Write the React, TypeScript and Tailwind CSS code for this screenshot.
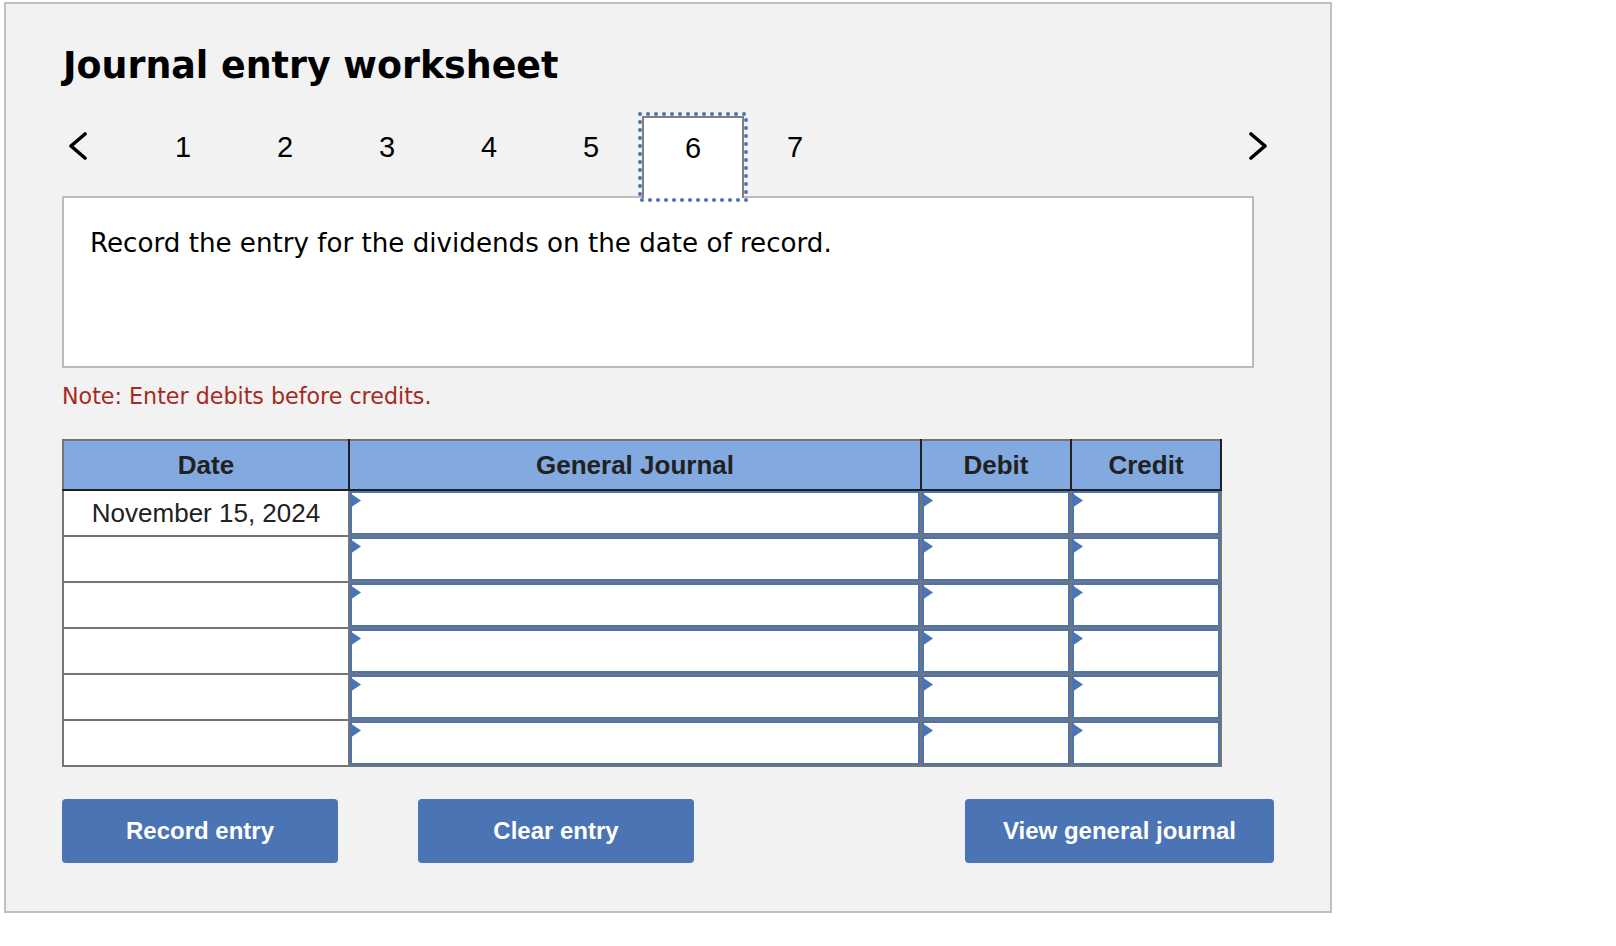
const tabs = [1, 2, 3, 4, 5, 6, 7];
const rows = ["November 15, 2024", "", "", "", "", ""];

function Chevron({ right }: { right?: boolean }) {
  return (
    <svg width="18" height="28" viewBox="0 0 18 28" fill="none" stroke="#000" strokeWidth="3.6" strokeLinecap="round" strokeLinejoin="round">
      <path d={right ? "M2 2l14 12L2 26" : "M16 2L2 14l14 12"} />
    </svg>
  );
}

function EntryCell() {
  return (
    <td className="border-2 border-[#757575] p-0 h-[46px]">
      <div className="relative h-[44px] border-2 border-[#4a74b4] bg-white">
        <svg className="absolute -left-[2px] top-0" width="12" height="15" viewBox="0 0 12 15">
          <path d="M0 0l11 7.5L0 15z" fill="#4a74b4" />
        </svg>
      </div>
    </td>
  );
}

function Btn({ label, w }: { label: string; w: string }) {
  return (
    <button className={`${w} h-[64px] rounded-[4px] bg-[#4a74b4] text-white text-[24px] font-bold`}>{label}</button>
  );
}

export default function App() {
  return (
    <div className="bg-white h-[946px] pl-1 pt-0.5 font-['Liberation_Sans',sans-serif]">
      <div className="w-[1328px] h-[911px] border-2 border-[#c0c0c0] bg-[#f2f2f2] pl-[56px] pt-[37px]">
        <h1 className="ml-px font-['DejaVu_Sans',sans-serif] font-bold text-[36.4px] leading-[50px] text-black mb-[25px]">Journal entry worksheet</h1>

        <div className="flex items-center w-[1212px] h-[82px] relative z-10">
          <div className="w-[70px] pl-[7px] mb-[22px] flex"><Chevron /></div>
          {tabs.map((t) => (
            <div
              key={t}
              className={
                t === 6
                  ? "relative w-[102px] h-[82px] pb-[19px] flex items-center justify-center text-[29px] text-black bg-white border-2 border-b-0 border-[#7f7f7f]"
                  : "w-[102px] h-[82px] pb-[19px] flex items-center justify-center text-[29px] text-black"
              }
            >
              {t}
              {t === 6 && (
                <svg className="absolute -left-[6px] -top-[6px]" width="110" height="90" viewBox="0 0 110 90" fill="none">
                  <rect x="2" y="2" width="106" height="86" stroke="#4a74b4" strokeWidth="4" strokeLinecap="round" strokeDasharray="0 8" />
                </svg>
              )}
            </div>
          ))}
          <div className="ml-auto pr-[7px] mb-[22px] flex"><Chevron right /></div>
        </div>

        <div className="-mt-0.5 w-[1192px] h-[172px] border-2 border-[#bbbbbb] bg-white pl-[26px] pt-[25px] font-['DejaVu_Sans',sans-serif] text-[26.15px] leading-[40px] text-black">
          Record the entry for the dividends on the date of record.
        </div>

        <p className="mt-[14px] font-['DejaVu_Sans',sans-serif] text-[22.2px] leading-[29px] mb-[28px] text-[#a52a1f]">Note: Enter debits before credits.</p>

        <table className="w-[1158px] table-fixed border-collapse bg-white text-[26px] text-[#212121]">
          <colgroup>
            <col className="w-[286px]" />
            <col className="w-[572px]" />
            <col className="w-[150px]" />
            <col className="w-[150px]" />
          </colgroup>
          <thead>
            <tr className="h-[50px] bg-[#82aae0] font-bold">
              <th className="border-2 border-t-[#757575] border-l-[#757575] border-r-[#212121] border-b-[#212121]">Date</th>
              <th className="border-2 border-t-[#757575] border-r-[#212121] border-b-[#212121]">General Journal</th>
              <th className="border-2 border-t-[#757575] border-r-[#212121] border-b-[#212121]">Debit</th>
              <th className="border-2 border-t-[#757575] border-r-[#212121] border-b-[#212121]">Credit</th>
            </tr>
          </thead>
          <tbody>
            {rows.map((d, i) => (
              <tr key={i}>
                <td className="border-2 border-[#757575] p-0 h-[46px] text-center">{d}</td>
                <EntryCell />
                <EntryCell />
                <EntryCell />
              </tr>
            ))}
          </tbody>
        </table>

        <div className="flex mt-[32px]">
          <Btn label="Record entry" w="w-[276px]" />
          <div className="ml-[80px]"><Btn label="Clear entry" w="w-[276px]" /></div>
          <div className="ml-[271px]"><Btn label="View general journal" w="w-[309px]" /></div>
        </div>
      </div>
    </div>
  );
}
